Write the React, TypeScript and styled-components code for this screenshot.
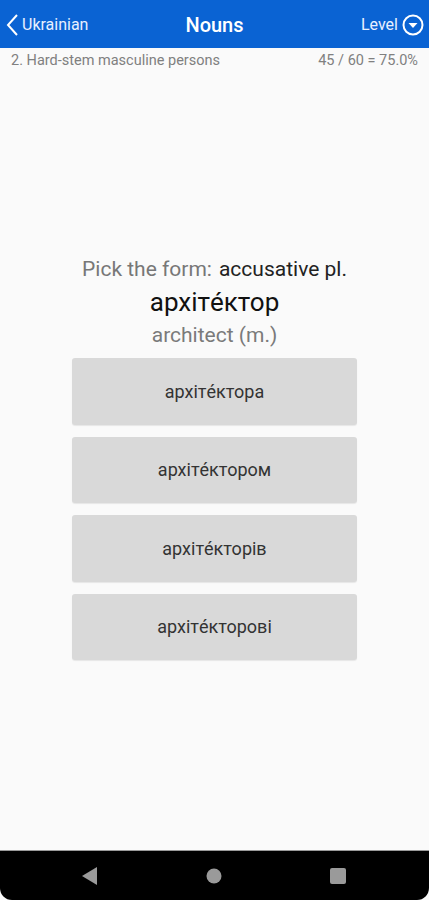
import styled, { createGlobalStyle } from "styled-components";

const GlobalStyle = createGlobalStyle`
  html, body {
    margin: 0;
    padding: 0;
    background: #fafafa;
    font-family: Roboto, "Noto Sans", sans-serif;
  }
`;

const Screen = styled.div`
  width: 429px;
  height: 900px;
  display: flex;
  flex-direction: column;
  background: #fafafa;
  overflow: hidden;
`;

const Header = styled.div`
  height: 48px;
  background: #0a63d3;
  display: grid;
  grid-template-columns: 1fr auto 1fr;
  align-items: center;
  color: #fff;
  padding: 1px 5px 0 5px;
  box-sizing: border-box;
`;

const BackLink = styled.div`
  display: flex;
  align-items: center;
  gap: 3px;
  font-size: 16px;
  color: #e8f0ff;
`;

const Title = styled.div`
  font-size: 20px;
  font-weight: 500;
`;

const LevelBtn = styled.div`
  justify-self: end;
  display: flex;
  align-items: center;
  gap: 4px;
  font-size: 16px;
  color: #e8f0ff;
`;

const SubBar = styled.div`
  display: flex;
  justify-content: space-between;
  padding: 4px 11px 0 11px;
  height: 20px;
  font-size: 14.5px;
  color: #808080;
`;

const Body = styled.div`
  flex: 1;
  display: flex;
  flex-direction: column;
  align-items: center;
  padding-top: 183px;
`;

const Prompt = styled.div`
  font-size: 21px;
  color: #777;
  line-height: 28px;
`;

const Case = styled.span`
  color: #222;
  margin-left: 7px;
`;

const Word = styled.div`
  font-size: 26px;
  color: #111;
  line-height: 36px;
  margin-top: 1px;
`;

const Gloss = styled.div`
  font-size: 21px;
  color: #7a7a7a;
  line-height: 28px;
  margin-top: 1px;
`;

const Options = styled.div`
  margin-top: 9px;
  display: flex;
  flex-direction: column;
  gap: 12px;
`;

const Option = styled.button`
  width: 285px;
  height: 66.5px;
  border: none;
  border-radius: 3px;
  background: #d9d9d9;
  font-family: Roboto, "Noto Sans", sans-serif;
  font-size: 18px;
  color: #333;
  box-shadow: 0 1px 1px rgba(0, 0, 0, 0.08);
`;

const NavBar = styled.div`
  height: 50px;
  background: #000;
  border-top: 1px solid #9a9a9a;
  border-radius: 0 0 12px 12px;
  display: flex;
  justify-content: space-between;
  align-items: center;
  padding: 0 83px 0 82px;
  box-sizing: border-box;
`;

const options = ["архітéктора", "архітéктором", "архітéкторів", "архітéкторові"];

export default function App() {
  return (
    <>
      <GlobalStyle />
      <Screen>
        <Header>
          <BackLink>
            <svg width="14" height="24" viewBox="0 0 14 24">
              <path d="M12 2 L3 12 L12 22" stroke="#fff" strokeWidth="2" fill="none" />
            </svg>
            Ukrainian
          </BackLink>
          <Title>Nouns</Title>
          <LevelBtn>
            Level
            <svg width="22" height="22" viewBox="0 0 22 22">
              <circle cx="11" cy="11" r="9.5" stroke="#fff" strokeWidth="2" fill="none" />
              <path d="M6.5 9 L15.5 9 L11 14 Z" fill="#fff" />
            </svg>
          </LevelBtn>
        </Header>
        <SubBar>
          <span>2. Hard-stem masculine persons</span>
          <span>45 / 60 = 75.0%</span>
        </SubBar>
        <Body>
          <Prompt>
            Pick the form:<Case>accusative pl.</Case>
          </Prompt>
          <Word>архітéктор</Word>
          <Gloss>architect (m.)</Gloss>
          <Options>
            {options.map((o) => (
              <Option key={o}>{o}</Option>
            ))}
          </Options>
        </Body>
        <NavBar>
          <svg width="16" height="18" viewBox="0 0 16 18">
            <path d="M15 0 L15 18 L0 9 Z" fill="#9a9a9a" />
          </svg>
          <svg width="16" height="16" viewBox="0 0 16 16">
            <circle cx="8" cy="8" r="7.5" fill="#9a9a9a" />
          </svg>
          <svg width="16" height="16" viewBox="0 0 16 16">
            <rect x="0" y="0" width="16" height="16" rx="2" fill="#9a9a9a" />
          </svg>
        </NavBar>
      </Screen>
    </>
  );
}
